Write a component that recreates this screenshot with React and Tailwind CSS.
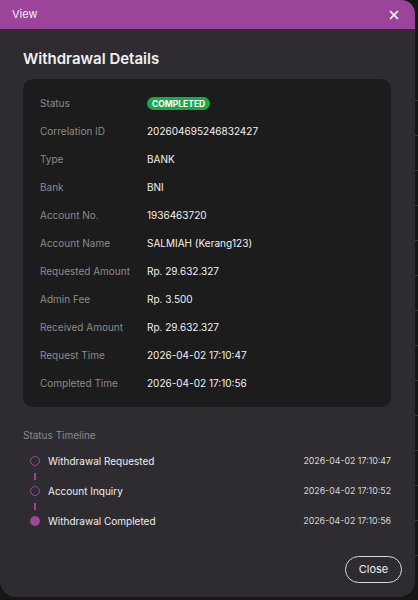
import { X } from "lucide-react";

const details = [
  ["Correlation ID", "202604695246832427"],
  ["Type", "BANK"],
  ["Bank", "BNI"],
  ["Account No.", "1936463720"],
  ["Account Name", "SALMIAH (Kerang123)"],
  ["Requested Amount", "Rp. 29.632.327"],
  ["Admin Fee", "Rp. 3.500"],
  ["Received Amount", "Rp. 29.632.327"],
  ["Request Time", "2026-04-02 17:10:47"],
  ["Completed Time", "2026-04-02 17:10:56"],
];

const timeline = [
  { label: "Withdrawal Requested", time: "2026-04-02 17:10:47", done: false },
  { label: "Account Inquiry", time: "2026-04-02 17:10:52", done: false },
  { label: "Withdrawal Completed", time: "2026-04-02 17:10:56", done: true },
];

function Row({ label, children }) {
  return (
    <div className="flex items-center h-[28px]">
      <span className="w-[107px] text-[#8b8b8b]">{label}</span>
      <span className="text-[#f1f1f1]">{children}</span>
    </div>
  );
}

export default function App() {
  return (
    <div className="relative w-[418px] h-[600px] overflow-hidden bg-[#161616] font-['Inter',sans-serif] text-[10px]">
      {/* page behind the overlay */}
      <div className="absolute right-0 top-[100px] w-[3px] h-[500px] flex flex-col gap-[34px]">
        {Array.from({ length: 14 }).map((_, i) => (
          <div key={i} className="h-px bg-[#3a3a3a]" />
        ))}
      </div>
      <div className="absolute left-[20px] top-[588px] flex gap-[110px] text-[#3c3c3c] text-[8px] leading-[10px]">
        <span>0016 00 0000</span>
        <span>S000 D 0000 NO00 00000000 (000000)</span>
      </div>

      <div className="relative w-[415px] h-[597px] bg-[#2e2c30] rounded-tr-[14px] rounded-br-[16px] rounded-bl-[16px] flex flex-col overflow-hidden">
        <div className="h-[29px] bg-[#9b449a] flex items-center justify-between pl-[12px] pr-[14px]">
          <span className="text-[11px] text-[#f2e9f2]">View</span>
          <X size={14} strokeWidth={3} className="text-white" />
        </div>

        <div className="px-[23px] pt-[22px] flex flex-col flex-1">
          <h2 className="text-[15px] font-semibold text-[#f0f0f0] leading-[15px]">Withdrawal Details</h2>

          <div className="mt-[13px] w-[368px] bg-[#1c1c1c] rounded-[10px] px-[17px] py-[10px]">
            <Row label="Status">
              <span className="inline-flex items-center h-[13px] px-[5px] rounded-full bg-[#1fa64a] text-white text-[8.5px] font-bold">
                COMPLETED
              </span>
            </Row>
            {details.map(([l, v]) => (
              <Row key={l} label={l}>{v}</Row>
            ))}
          </div>

          <div className="mt-[21px] text-[#8b8b8b] leading-[15px]">Status Timeline</div>

          <div className="mt-[11px] w-[368px] flex flex-col">
            {timeline.map((t, i) => (
              <div key={t.label} className="flex flex-col">
                <div className="flex items-center justify-between h-[14px] pl-[7px]">
                  <div className="flex items-center gap-[8px]">
                    <span
                      className={
                        t.done
                          ? "w-[10px] h-[10px] rounded-full bg-[#9b449a]"
                          : "w-[10px] h-[10px] rounded-full border-[1.5px] border-[#9b449a]"
                      }
                    />
                    <span className="text-[10px] text-[#eeeeee]">{t.label}</span>
                  </div>
                  <span className="text-[8.8px] text-[#d8d8d8]">{t.time}</span>
                </div>
                {i < timeline.length - 1 && (
                  <div className="h-[16px] pl-[11px] flex items-center">
                    <div className="w-[2px] h-[7px] bg-[#9b449a]" />
                  </div>
                )}
              </div>
            ))}
          </div>

          <div className="mt-auto mb-[14px] flex justify-end -mr-[10px]">
            <button className="w-[57px] h-[27px] rounded-full border border-[#d8d8d8] text-[11px] text-[#f0f0f0]">
              Close
            </button>
          </div>
        </div>
      </div>
    </div>
  );
}
